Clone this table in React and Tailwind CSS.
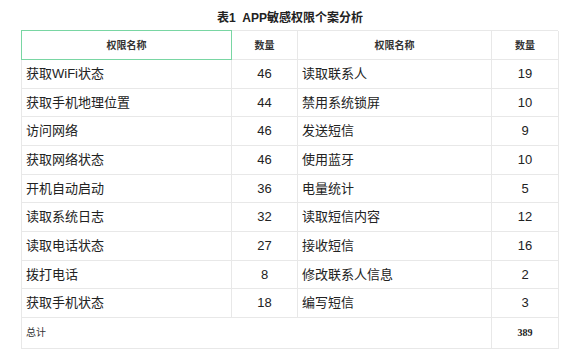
import React from "react";

const rows = [
  ["获取WiFi状态", "46", "读取联系人", "19"],
  ["获取手机地理位置", "44", "禁用系统锁屏", "10"],
  ["访问网络", "46", "发送短信", "9"],
  ["获取网络状态", "46", "使用蓝牙", "10"],
  ["开机自动启动", "36", "电量统计", "5"],
  ["读取系统日志", "32", "读取短信内容", "12"],
  ["读取电话状态", "27", "接收短信", "16"],
  ["拨打电话", "8", "修改联系人信息", "2"],
  ["获取手机状态", "18", "编写短信", "3"],
];

const font = { fontFamily: '"Liberation Sans", "Noto Sans CJK SC", sans-serif' };

export default function App() {
  return (
    <div className="w-[580px] h-[364px] bg-white text-[#222]" style={font}>
      <div className="h-[30px] flex items-center justify-center pt-[6px] text-[12px] font-bold text-[#222] whitespace-pre">
        表1  APP敏感权限个案分析
      </div>
      <div className="ml-[21px] w-[537px] border-l border-t border-[#e8e8e8] grid grid-cols-[210px_66px_194px_67px]">
        <div className="relative h-[29px] border-r border-b border-[#e8e8e8] flex items-center justify-center text-[10px] font-bold text-[#333]">
          <div className="absolute -left-px -top-px w-[211px] h-[30px] border border-[#79d6a3]"></div>
          权限名称
        </div>
        <div className="h-[29px] border-r border-b border-[#e8e8e8] flex items-center justify-center text-[10px] font-bold text-[#333]">数量</div>
        <div className="h-[29px] border-r border-b border-[#e8e8e8] flex items-center justify-center text-[10px] font-bold text-[#333]">权限名称</div>
        <div className="h-[29px] border-r border-b border-[#e8e8e8] flex items-center justify-center text-[10px] font-bold text-[#333]">数量</div>
        {rows.map((r, i) => (
          <React.Fragment key={i}>
            <div className="h-[28.67px] border-r border-b border-[#e8e8e8] flex items-center pl-[4px] text-[13px]">{r[0]}</div>
            <div className="h-[28.67px] border-r border-b border-[#e8e8e8] flex items-center justify-center text-[13px]">{r[1]}</div>
            <div className="h-[28.67px] border-r border-b border-[#e8e8e8] flex items-center pl-[4px] text-[13px]">{r[2]}</div>
            <div className="h-[28.67px] border-r border-b border-[#e8e8e8] flex items-center justify-center text-[13px]">{r[3]}</div>
          </React.Fragment>
        ))}
        <div className="col-span-3 h-[31px] border-r border-b border-[#e8e8e8] flex items-center pl-[4px] text-[10px] text-[#333]">总计</div>
        <div className="h-[31px] border-r border-b border-[#e8e8e8] flex items-center justify-center text-[10px] font-bold" style={{ fontFamily: '"Liberation Serif", serif' }}>389</div>
      </div>
    </div>
  );
}
